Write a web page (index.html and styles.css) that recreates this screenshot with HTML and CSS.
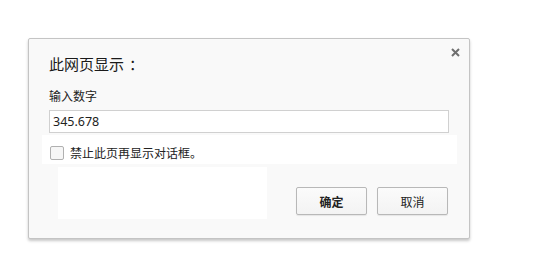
FILE: index.html
```html
<!DOCTYPE html>
<html lang="zh">
<head>
<meta charset="utf-8">
<link rel="stylesheet" href="styles.css">
</head>
<body>
<div class="dialog">
  <div class="patch patch-a"></div>
  <div class="patch patch-b"></div>
  <div class="close" aria-label="关闭">
    <svg width="9" height="9" viewBox="0 0 9 9"><path d="M1 1 L8 8 M8 1 L1 8" stroke="#6f6f6f" stroke-width="2" fill="none"/></svg>
  </div>
  <div class="title">此网页显示<span class="colon">：</span></div>
  <div class="label">输入数字</div>
  <div class="input">345.678</div>
  <div class="check-row">
    <span class="checkbox"></span>
    <span class="check-text">禁止此页再显示对话框。</span>
  </div>
  <div class="buttons">
    <button class="btn btn-default">确定</button>
    <button class="btn">取消</button>
  </div>
</div>
</body>
</html>
```
FILE: styles.css
```css
html, body {
  margin: 0;
  padding: 0;
  background: #ffffff;
}
body {
  font-family: "Noto Sans CJK SC", "Noto Sans", sans-serif;
  color: #222;
  width: 534px;
  height: 266px;
  overflow: hidden;
}
.dialog {
  position: relative;
  box-sizing: border-box;
  margin: 38px 0 0 28px;
  width: 442px;
  height: 201px;
  background: #f9f9f9;
  border: 1px solid #c4c4c4;
  border-radius: 2px;
  box-shadow: 0 2px 3px rgba(0,0,0,0.22);
  padding: 0 19px 0 20px;
  display: flex;
  flex-direction: column;
}
.patch {
  position: absolute;
  background: #ffffff;
  z-index: 0;
}
.patch-a {
  left: 13px;
  top: 96px;
  width: 415px;
  height: 29px;
}
.patch-b {
  left: 29px;
  top: 128px;
  width: 209px;
  height: 52px;
}
.close {
  position: absolute;
  right: 9px;
  top: 9px;
  width: 9px;
  height: 9px;
  display: flex;
}
.title, .label, .input, .check-row, .buttons {
  position: relative;
  z-index: 1;
}
.title {
  margin-top: 15px;
  font-size: 15px;
  line-height: 20px;
  color: #1a1a1a;
}
.colon {
  padding-left: 5px;
}
.label {
  margin-top: 14px;
  font-size: 12px;
  line-height: 16px;
  color: #222;
}
.input {
  margin-top: 6px;
  box-sizing: border-box;
  width: 400px;
  height: 23px;
  background: #ffffff;
  border: 1px solid #d0d0d0;
  padding: 0 3px;
  font-family: "Noto Sans", "Liberation Sans", sans-serif;
  font-size: 12.5px;
  line-height: 21px;
  color: #222;
}
.check-row {
  margin-top: 13px;
  display: flex;
  align-items: center;
  height: 14px;
}
.checkbox {
  box-sizing: border-box;
  width: 14px;
  height: 14px;
  margin-left: 1px;
  border: 1px solid #b0b0b0;
  border-radius: 2px;
  background: #f6f6f6;
}
.check-text {
  margin-left: 6px;
  font-size: 12px;
  line-height: 16px;
  color: #222;
}
.buttons {
  margin-top: 27px;
  margin-right: 2px;
  display: flex;
  justify-content: flex-end;
  gap: 10px;
}
.btn {
  box-sizing: border-box;
  width: 71px;
  height: 28px;
  border: 1px solid #b8b8b8;
  border-radius: 2px;
  background: linear-gradient(#fbfbfb, #f3f3f3);
  box-shadow: 0 1px 1px rgba(0,0,0,0.08);
  font-family: "Noto Sans CJK SC", sans-serif;
  font-size: 12px;
  color: #222;
  padding: 0;
}
.btn-default {
  font-weight: bold;
}
```
